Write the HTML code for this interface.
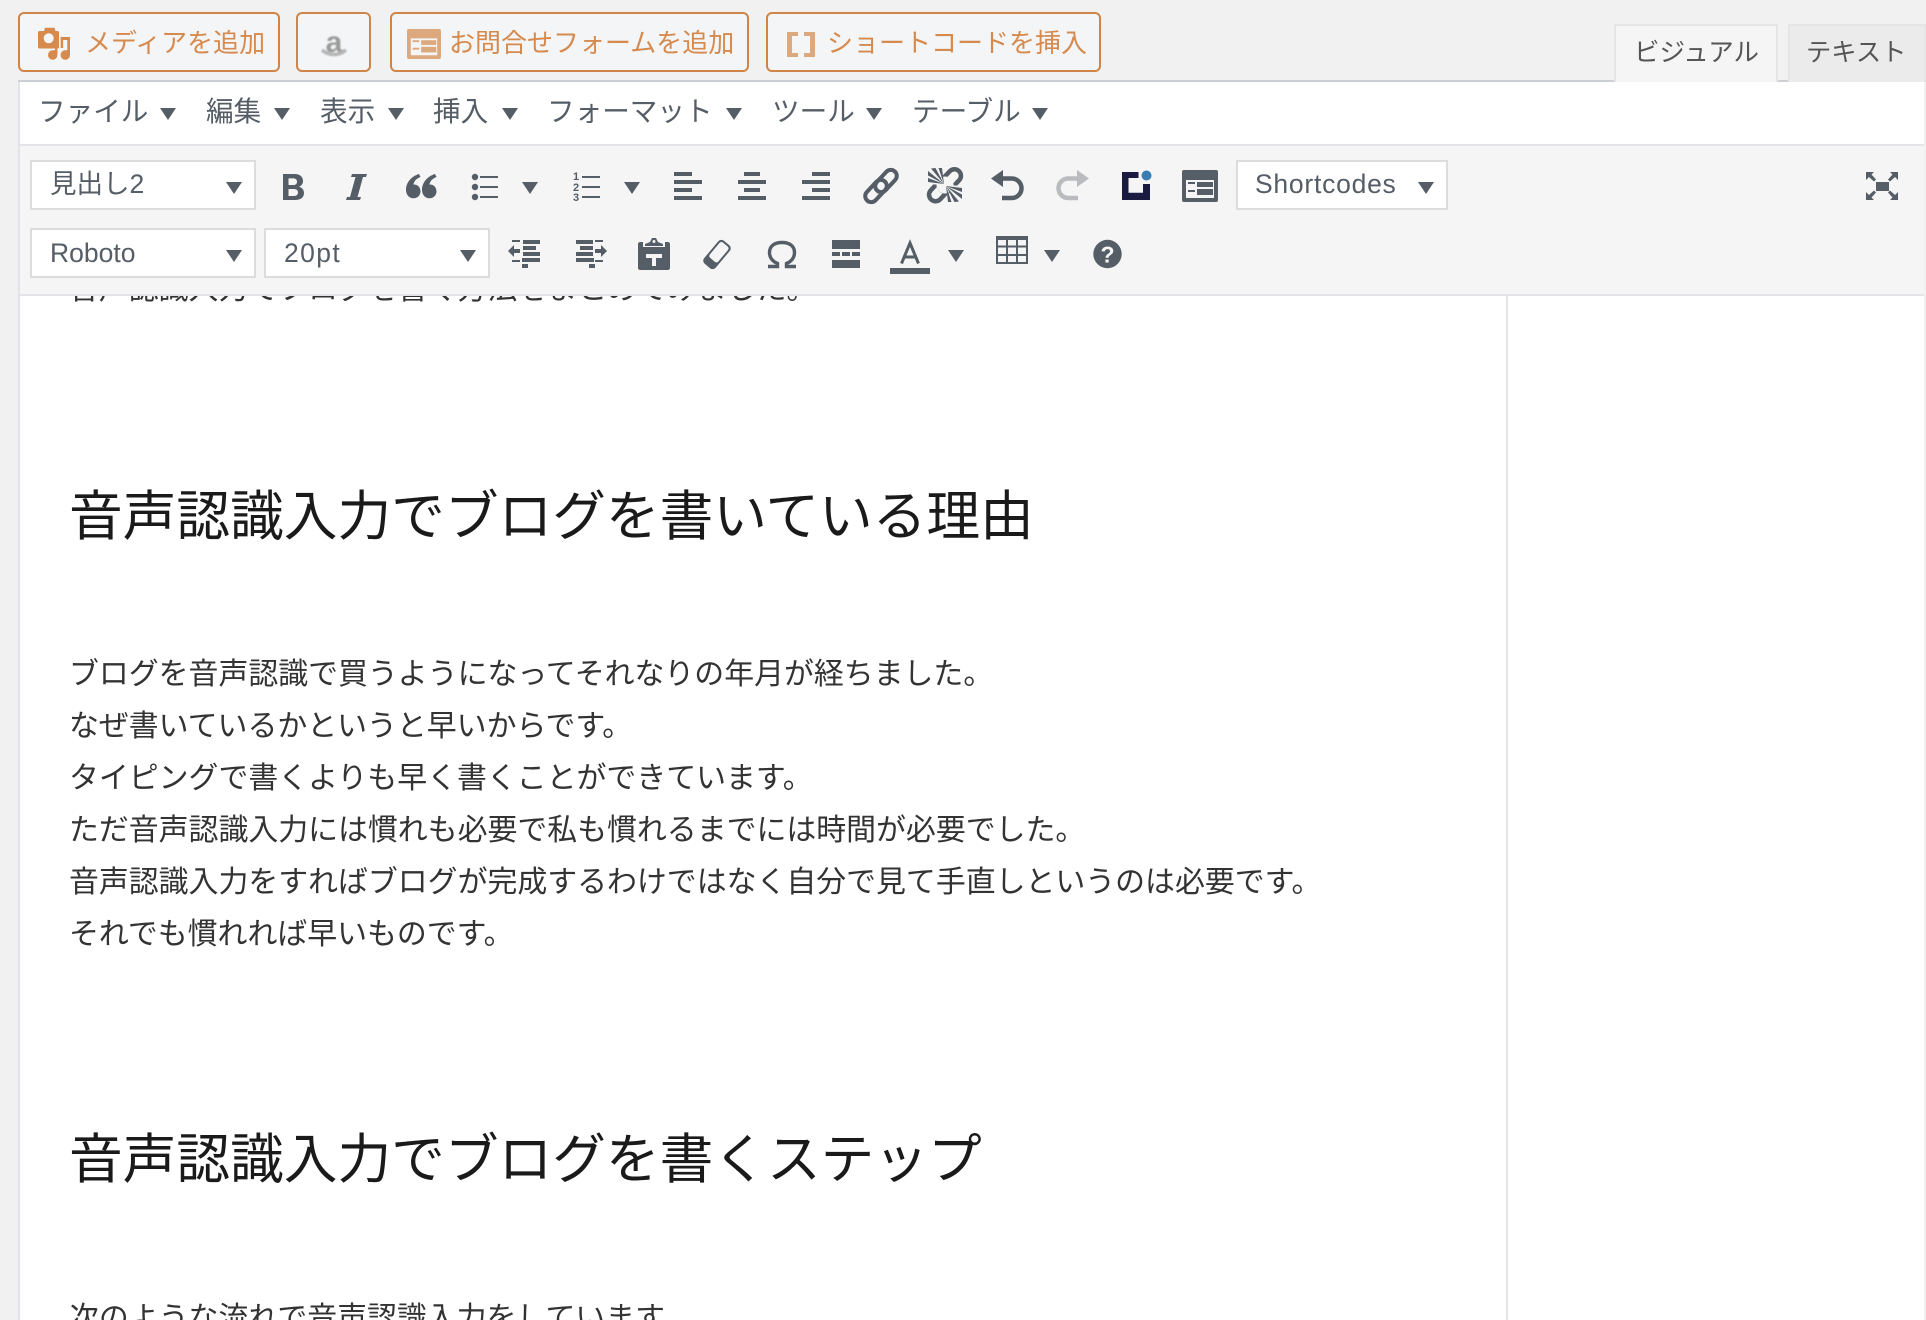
<!DOCTYPE html>
<html lang="ja">
<head>
<meta charset="utf-8">
<title>Editor</title>
<style>
html,body{margin:0;padding:0;width:1926px;height:1320px;overflow:hidden;background:#f1f1f1}
body{position:relative;font-family:"Liberation Sans","Noto Sans CJK JP",sans-serif}
.b{position:absolute;box-sizing:border-box}
.t{position:absolute;white-space:nowrap;height:40px;line-height:40px;font-family:"Liberation Sans","Noto Sans CJK JP",sans-serif}
.btn{position:absolute;box-sizing:border-box;top:12px;height:60px;border:2px solid #d08548;border-radius:6px;background:#f3f5f6}
.o{color:#d68a4e;font-size:26px;top:23px}
.m{color:#555d66;font-size:27.6px;top:92px}
.s{color:#555d66;font-size:26.5px}
.sel{position:absolute;box-sizing:border-box;background:#fff;border:2px solid #dcdcdc}
.p{color:#333;font-size:29.9px;left:69px;height:52px;line-height:52px}
.h{color:#1a1a1a;font-size:53.7px;left:69px;height:70px;line-height:70px}
svg{position:absolute;left:0;top:0}
</style>
</head>
<body>

<!-- buttons -->
<div class="btn" style="left:18px;width:262px"></div>
<div class="btn" style="left:296px;width:75px"></div>
<div class="btn" style="left:390px;width:359px"></div>
<div class="btn" style="left:766px;width:335px"></div>

<!-- tabs -->
<div class="b" style="left:1614px;top:24px;width:164px;height:60px;background:#f5f5f5;border:2px solid #e5e5e5;border-bottom:0"></div>
<div class="b" style="left:1788px;top:24px;width:138px;height:58px;background:#ebebeb;border:2px solid #e5e5e5;border-bottom:0"></div>

<!-- editor frame -->
<div class="b" style="left:18px;top:80px;width:1596px;height:2px;background:#ccd0d4"></div>
<div class="b" style="left:1778px;top:80px;width:10px;height:2px;background:#ccd0d4"></div>
<div class="b" style="left:18px;top:82px;width:1906px;height:1238px;background:#fff;border-left:2px solid #e2e4e7"></div>
<div class="b" style="left:1614px;top:80px;width:164px;height:4px;background:#f5f5f5;border:2px solid #e5e5e5;border-width:0 2px"></div>
<div class="b" style="left:1506px;top:296px;width:2px;height:1024px;background:#e5e5e5"></div>

<!-- content -->
<div class="t p" style="top:264px">音声認識入力でブログを書く方法をまとめてみました。</div>
<div class="t h" style="top:482px">音声認識入力でブログを書いている理由</div>
<div class="t p" style="top:649px">ブログを音声認識で買うようになってそれなりの年月が経ちました。</div>
<div class="t p" style="top:701px">なぜ書いているかというと早いからです。</div>
<div class="t p" style="top:753px">タイピングで書くよりも早く書くことができています。</div>
<div class="t p" style="top:805px">ただ音声認識入力には慣れも必要で私も慣れるまでには時間が必要でした。</div>
<div class="t p" style="top:857px">音声認識入力をすればブログが完成するわけではなく自分で見て手直しというのは必要です。</div>
<div class="t p" style="top:909px">それでも慣れれば早いものです。</div>
<div class="t h" style="top:1125px">音声認識入力でブログを書くステップ</div>
<div class="t p" style="top:1293px">次のような流れで音声認識入力をしています。</div>

<!-- toolbar -->
<div class="b" style="left:20px;top:82px;width:1904px;height:64px;background:#fff;border-bottom:2px solid #e2e4e7"></div>
<div class="b" style="left:20px;top:146px;width:1904px;height:150px;background:#f5f5f5;border-bottom:2px solid #e2e4e7"></div>

<div class="sel" style="left:30px;top:160px;width:226px;height:50px"></div>
<div class="sel" style="left:30px;top:228px;width:226px;height:50px"></div>
<div class="sel" style="left:264px;top:228px;width:226px;height:50px"></div>
<div class="sel" style="left:1236px;top:160px;width:212px;height:50px"></div>

<!-- text -->
<div class="t o" style="left:85px">メディアを追加</div>
<div class="t o" style="left:449px">お問合せフォームを追加</div>
<div class="t o" style="left:827px">ショートコードを挿入</div>
<div class="t" style="left:1634px;top:33px;font-size:25.5px;color:#555">ビジュアル</div>
<div class="t" style="left:1806px;top:33px;font-size:25.3px;color:#555">テキスト</div>

<div class="t m" style="left:38px">ファイル</div>
<div class="t m" style="left:206px">編集</div>
<div class="t m" style="left:320px">表示</div>
<div class="t m" style="left:433px">挿入</div>
<div class="t m" style="left:547px">フォーマット</div>
<div class="t m" style="left:772px">ツール</div>
<div class="t m" style="left:912px">テーブル</div>

<div class="t s" style="left:50px;top:164px">見出し2</div>
<div class="t s" style="left:50px;top:233px">Roboto</div>
<div class="t s" style="left:284px;top:233px;letter-spacing:1.4px">20pt</div>
<div class="t s" style="left:1255px;top:164px;letter-spacing:.75px">Shortcodes</div>

<svg width="1926" height="1320" viewBox="0 0 1926 1320" xmlns="http://www.w3.org/2000/svg">
<defs><filter id="bl"><feGaussianBlur stdDeviation="0.7"/></filter></defs>

<!-- media icon -->
<g fill="#d68a4e">
<path fill-rule="evenodd" d="M44 31l1-3.300h9.500l1 3.300h2c1 0 1.500.8 1.500 1.500V47c0 1-.8 1.500-1.500 1.500H39.500c-1 0-1.500-.8-1.500-1.500V32.500c0-1 .8-1.500 1.500-1.500zM48.700 33.300a5 5 0 1 0 0 10 5 5 0 0 0 0-10z"/>
<rect x="55" y="48" width="2.400" height="7"/>
<rect x="67.300" y="37" width="2.700" height="18"/>
<rect x="60.700" y="37" width="9" height="3"/>
<rect x="60.700" y="37" width="2.400" height="11"/>
<path d="M57.400 50v5a4.700 4.700 0 1 1-4.700-4.700z"/>
<path d="M70 50v5a4.700 4.700 0 1 1-4.700-4.700z"/>
</g>
<!-- amazon -->
<g filter="url(#bl)">
<text x="334" y="52" text-anchor="middle" font-family="Liberation Sans" font-weight="700" font-size="30" fill="#9a9a9a">a</text>
<path d="M322 50c7 6 17 6 24 0" fill="none" stroke="#b5b5b5" stroke-width="3.500"/>
</g>
<!-- orange form icon -->
<g transform="translate(407 29) scale(.944 .9375) translate(-1182 -170)">
<rect x="1182" y="170" width="36" height="32" rx="2" fill="#dca87e"/>
<rect x="1186" y="180" width="28" height="18" fill="#f3f5f6"/>
<g fill="#dca87e"><rect x="1188" y="182" width="7" height="2"/><rect x="1188" y="190" width="7" height="2"/><rect x="1197" y="182" width="16" height="5"/><rect x="1197" y="189" width="16" height="6"/></g>
</g>
<!-- brackets -->
<g fill="#dca87e">
<path d="M787 32h11v4h-6v17h6v4h-11z"/>
<path d="M815 32h-11v4h6v17h-6v4h11z"/>
</g>

<!-- triangles -->
<g fill="#555d66">
<path d="M160 108h16l-8 12z"/>
<path d="M274 108h16l-8 12z"/>
<path d="M388 108h16l-8 12z"/>
<path d="M502 108h16l-8 12z"/>
<path d="M726 108h16l-8 12z"/>
<path d="M866 108h16l-8 12z"/>
<path d="M1032 108h16l-8 12z"/>
<path d="M226 182h16l-8 12z"/>
<path d="M226 250h16l-8 12z"/>
<path d="M460 250h16l-8 12z"/>
<path d="M1418 182h16l-8 12z"/>
<path d="M522 182h16l-8 12z"/>
<path d="M624 182h16l-8 12z"/>
<path d="M948 250h16l-8 12z"/>
<path d="M1044 250h16l-8 12z"/>

<!-- B -->
<path fill-rule="evenodd" d="M283 174h11.500c5.500 0 8.500 2.800 8.500 7 0 2.800-1.500 4.800-4 5.700 3.200.8 5 3.100 5 6.300 0 4.500-3.400 7-9 7H283zM288.500 178.400v6.600h4.800c2.400 0 3.700-1.200 3.700-3.300 0-2.100-1.300-3.300-3.800-3.300zM288.500 189v7h5.200c2.700 0 4.300-1.300 4.300-3.500 0-2.200-1.600-3.500-4.400-3.500z"/>
<!-- I -->
<path d="M352 174h15l-1 3h-3l-5.500 20h3.500l-1 3H346l1-3h3l5.500-20h-4.500z"/>
<!-- quote -->
<path d="M419 174l1.500 3c-4 1.500-6.500 4-7 7.500 4.200-.2 7 3 7 6.800 0 4-3 7-7 7-4.500 0-7.500-3.500-7.500-8.500 0-7 5-13.300 13-15.800z"/>
<path d="M435 174l1.500 3c-4 1.500-6.500 4-7 7.500 4.200-.2 7 3 7 6.800 0 4-3 7-7 7-4.500 0-7.500-3.500-7.500-8.500 0-7 5-13.300 13-15.800z"/>
<!-- bullets -->
<circle cx="475" cy="177" r="3.200"/><circle cx="475" cy="187" r="3.200"/><circle cx="475" cy="197" r="3.200"/>
<rect x="480" y="176" width="18" height="2"/><rect x="480" y="186" width="18" height="2"/><rect x="480" y="196" width="18" height="2"/>
<!-- numlist -->
<text x="573" y="180" font-family="Liberation Sans" font-size="11" font-weight="700">1</text>
<text x="573" y="191" font-family="Liberation Sans" font-size="11" font-weight="700">2</text>
<text x="573" y="201" font-family="Liberation Sans" font-size="11" font-weight="700">3</text>
<rect x="582" y="176" width="18" height="2"/><rect x="582" y="186" width="18" height="2"/><rect x="582" y="196" width="18" height="2"/>
<!-- align -->
<rect x="674" y="172" width="18" height="4"/><rect x="674" y="180" width="28" height="4"/><rect x="674" y="188" width="18" height="4"/><rect x="674" y="196" width="28" height="4"/>
<rect x="744" y="172" width="16" height="4"/><rect x="738" y="180" width="28" height="4"/><rect x="744" y="188" width="16" height="4"/><rect x="738" y="196" width="28" height="4"/>
<rect x="812" y="172" width="18" height="4"/><rect x="802" y="180" width="28" height="4"/><rect x="812" y="188" width="18" height="4"/><rect x="802" y="196" width="28" height="4"/>
</g>

<!-- link -->
<g fill="none" stroke="#555d66" stroke-width="4">
<rect x="873" y="175" width="26" height="12" rx="6" transform="rotate(-47 886 181)"/>
<rect x="863" y="185" width="26" height="12" rx="6" transform="rotate(-47 876 191)"/>
</g>
<!-- unlink -->
<g fill="none" stroke="#555d66" stroke-width="4.500">
<rect x="937" y="174" width="26" height="13" rx="6.500" transform="rotate(-47 950 180.500)"/>
<rect x="927" y="183.500" width="26" height="13" rx="6.500" transform="rotate(-47 940 190)"/>
</g>
<path d="M945 185L931 167h-5v17zM945 185L959 203h5v-17z" fill="#f5f5f5"/>
<circle cx="945" cy="185" r="8.500" fill="#f5f5f5"/>
<g fill="#555d66">
<path d="M944 184L928 178v4zM944 184L928 171v4.500zM944 184L931 168.500l4.500-.5zM944 184l-5.500-16 3.500 0z"/>
<path d="M946 186L962 192v-4zM946 186L962 199v-4.500zM946 186L959 201.500l-4.500.5zM946 186l5.500 16-3.500 0z"/>
</g>
<!-- undo / redo -->
<path d="M1000 178.500h11.750a9.750 9.750 0 0 1 0 19.500H1002" fill="none" stroke="#555d66" stroke-width="4.500"/>
<path d="M1003 170v17L991 178.500z" fill="#555d66"/>
<g transform="translate(2080 0) scale(-1 1)">
<path d="M1000 178.500h11.750a9.750 9.750 0 0 1 0 19.500H1002" fill="none" stroke="#b9bbbe" stroke-width="4.500"/>
<path d="M1003 170v17L991 178.500z" fill="#b9bbbe"/>
</g>
<!-- logo -->
<path d="M1122 172h16.500v6h-10v14.700h14.500V184H1150v16h-28z" fill="#1b1a40"/>
<circle cx="1146.500" cy="175.500" r="5" fill="#3a7db3"/>
<!-- form icon -->
<rect x="1182" y="170" width="36" height="32" rx="2" fill="#555d66"/>
<rect x="1186" y="180" width="28" height="18" fill="#f5f5f5"/>
<g fill="#555d66"><rect x="1188" y="182" width="7" height="2"/><rect x="1188" y="190" width="7" height="2"/><rect x="1197" y="182" width="16" height="5"/><rect x="1197" y="189" width="16" height="6"/></g>
<!-- fullscreen -->
<g fill="#555d66">
<rect x="1876" y="182" width="13" height="9"/>
<path d="M1866 172h8l-2.500 2.500 4.500 5-2 2-5-4.500-3 3z"/>
<path d="M1898 172h-8l2.500 2.500-4.500 5 2 2 5-4.500 3 3z"/>
<path d="M1866 200h8l-2.500-2.500 4.500-5-2-2-5 4.500-3-3z"/>
<path d="M1898 200h-8l2.500-2.500-4.500-5 2-2 5 4.500 3-3z"/>
</g>

<!-- row 2 -->
<g fill="#555d66">
<!-- outdent -->
<rect x="512" y="240" width="8" height="2"/><rect x="523" y="240" width="17" height="4"/><rect x="523" y="246" width="13" height="4"/><rect x="523" y="252" width="17" height="4"/><rect x="512" y="260" width="8" height="2"/><rect x="522" y="258" width="18" height="4"/><rect x="522" y="264" width="6" height="4"/>
<path d="M508 251l6-6v4h6v4h-6v4z"/>
<!-- indent -->
<rect x="595" y="240" width="8" height="2"/><rect x="576" y="240" width="17" height="4"/><rect x="580" y="246" width="13" height="4"/><rect x="576" y="252" width="17" height="4"/><rect x="595" y="260" width="8" height="2"/><rect x="576" y="258" width="18" height="4"/><rect x="589" y="264" width="6" height="4"/>
<path d="M607 251l-6-6v4h-6v4h6v4z"/>
<!-- paste -->
<path d="M640 242h3v5h22v-5h3c1 0 2 1 2 2v24c0 1-1 2-2 2h-28c-1 0-2-1-2-2v-24c0-1 1-2 2-2z"/>
<path fill-rule="evenodd" d="M645 244l5-2 2-4h4l2 4 5 2v2h-18zM654 240a1.500 1.500 0 1 0 0 3 1.500 1.500 0 0 0 0-3z"/>
<rect x="646" y="254" width="16" height="4" fill="#f5f5f5"/>
<rect x="652" y="258" width="4" height="8" fill="#f5f5f5"/>
<!-- hr -->
<rect x="832" y="240" width="28" height="9"/>
<rect x="832" y="252" width="8" height="4"/><rect x="842" y="252" width="8" height="4"/><rect x="852" y="252" width="8" height="4"/>
<rect x="832" y="260" width="28" height="8"/>
<!-- A bar -->
<rect x="890" y="268" width="40" height="6"/>
</g>
<!-- eraser -->
<g transform="translate(717 254.500) rotate(-50)">
<rect x="-15" y="-7.500" width="30" height="15" rx="4" fill="#555d66"/>
<rect x="-7" y="-5.500" width="20" height="11" rx="2.500" fill="#f5f5f5"/>
</g>
<!-- omega -->
<path d="M768 266.500h9.500v-3c-5-2-8-6-8-11 0-6.500 5-10 12.500-10s12.500 3.500 12.500 10c0 5-3 9-8 11v3h9.500" fill="none" stroke="#555d66" stroke-width="3.400"/>
<!-- A -->
<path d="M901.500 263.500l8.500-20.500 8.500 20.500M904.500 257h11" fill="none" stroke="#555d66" stroke-width="3"/>
<!-- table -->
<g fill="none" stroke="#555d66" stroke-width="2">
<rect x="997" y="237.500" width="30" height="25.500"/>
<path d="M997 246.500h30M997 255h30M1007 238v25M1017 238v25"/>
</g>
<rect x="996" y="236" width="32" height="4" fill="#555d66"/>
<!-- help -->
<circle cx="1107.500" cy="254" r="14.200" fill="#555d66"/>
<text x="1107.500" y="262.500" text-anchor="middle" font-family="Liberation Sans" font-weight="700" font-size="23" fill="#f5f5f5">?</text>
</svg>
</body>
</html>
